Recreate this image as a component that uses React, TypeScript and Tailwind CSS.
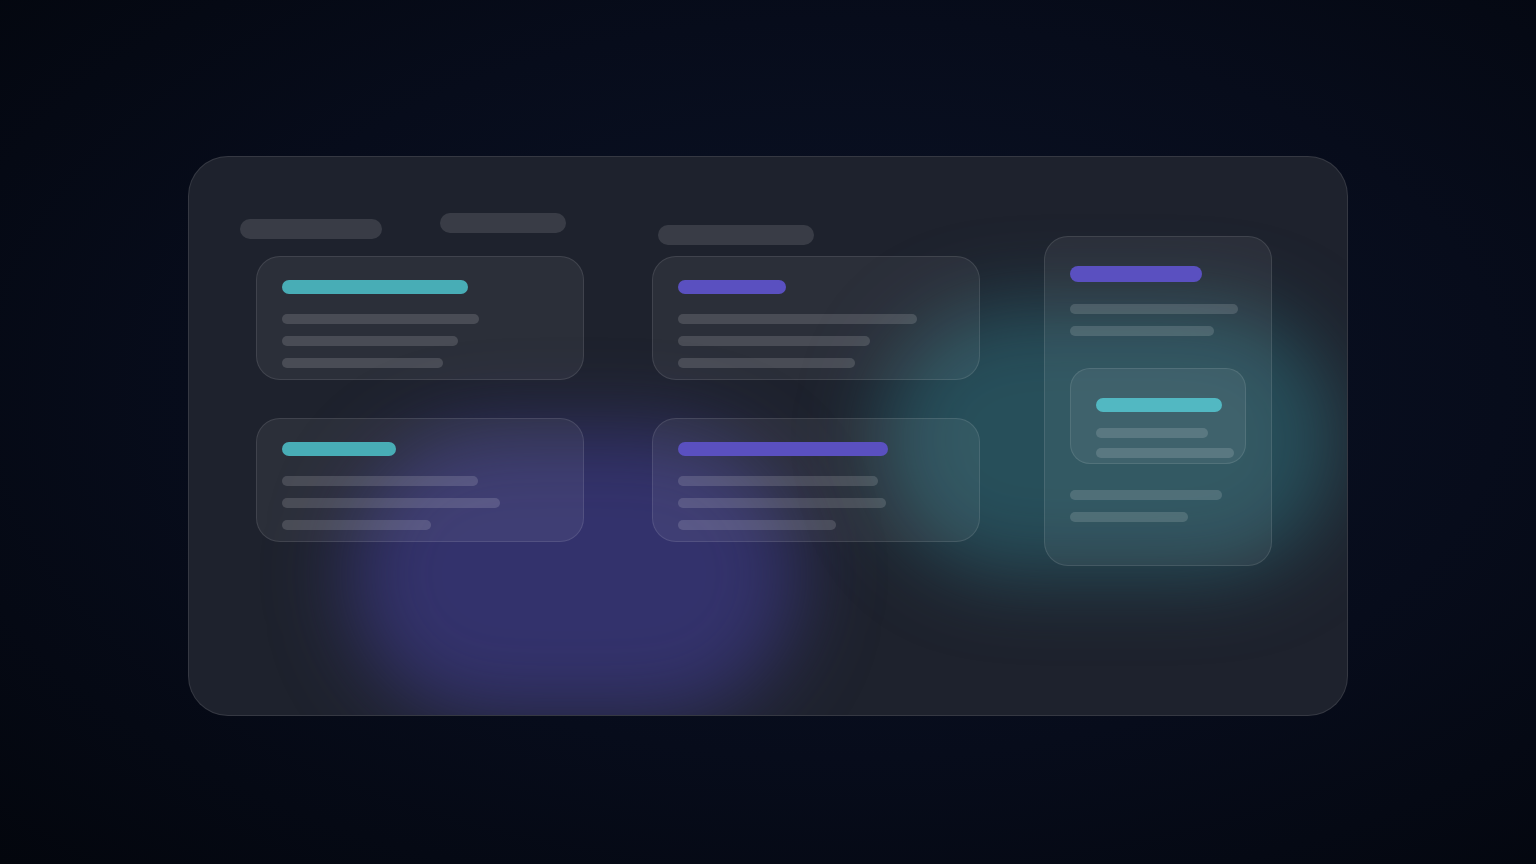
import { FC } from 'react'

type Tone = 'cyan' | 'purple'

interface SkeletonCardProps {
    tone: Tone
    barWidth: number
    lines: number[]
}

const barColor: Record<Tone, string> = {
    cyan: 'bg-[#48adb6]',
    purple: 'bg-[#5a50c0]',
}

const SkeletonCard: FC<SkeletonCardProps> = ({ tone, barWidth, lines }) => (
    <div className="relative h-[124px] w-[328px] rounded-[24px] border border-white/10 bg-white/[0.06] pl-[25px] pt-[23px]">
        <div className={`h-[14px] rounded-full ${barColor[tone]}`} style={{ width: barWidth }} />
        <div className="mt-[20px] flex flex-col gap-3">
            {lines.map((w, i) => (
                <div key={i} className="h-[10px] rounded-full bg-white/[0.14]" style={{ width: w }} />
            ))}
        </div>
    </div>
)

const cards: SkeletonCardProps[] = [
    { tone: 'cyan', barWidth: 186, lines: [197, 176, 161] },
    { tone: 'purple', barWidth: 108, lines: [239, 192, 177] },
    { tone: 'cyan', barWidth: 114, lines: [196, 218, 149] },
    { tone: 'purple', barWidth: 210, lines: [200, 208, 158] },
]

export default function App() {
    return (
        <div className="flex h-screen w-full items-center justify-center bg-[radial-gradient(ellipse_at_55%_45%,#0b1327_0%,#070c1b_55%,#03060d_100%)]">
            <div className="relative mt-[8px] h-[560px] w-[1160px] overflow-hidden rounded-[40px] border border-white/10 bg-[#1e222d]">
                {/* glow blobs */}
                <div className="pointer-events-none absolute left-[160px] top-[272px] h-[290px] w-[450px] rounded-full bg-[#4640a0]/55 blur-[40px]" />
                <div className="pointer-events-none absolute left-[690px] top-[148px] h-[270px] w-[460px] rounded-full bg-[#2f7b88]/50 blur-[40px]" />

                <div className="relative flex items-start pl-[51px] pt-[56px]">
                    {/* Left columns */}
                    <div className="flex flex-col">
                        <div className="flex h-[32px] items-start">
                            <div className="mt-[6px] h-[20px] w-[142px] rounded-full bg-white/[0.12]" />
                            <div className="ml-[58px] h-[20px] w-[126px] rounded-full bg-white/[0.12]" />
                            <div className="ml-[92px] mt-[12px] h-[20px] w-[156px] rounded-full bg-white/[0.12]" />
                        </div>
                        <div className="ml-[16px] mt-[11px] grid grid-cols-[328px_328px] gap-x-[68px] gap-y-[38px]">
                            {cards.map((c, i) => (
                                <SkeletonCard key={i} {...c} />
                            ))}
                        </div>
                    </div>

                    {/* Right tall card */}
                    <div className="ml-[64px] mt-[23px] h-[330px] w-[228px] rounded-[24px] border border-white/10 bg-white/[0.06] pl-[25px] pt-[29px]">
                        <div className="h-[16px] w-[132px] rounded-full bg-[#5a50c0]" />
                        <div className="mt-[22px] flex flex-col gap-3">
                            <div className="h-[10px] w-[168px] rounded-full bg-white/[0.14]" />
                            <div className="h-[10px] w-[144px] rounded-full bg-white/[0.14]" />
                        </div>
                        <div className="mt-[32px] h-[96px] w-[176px] rounded-[20px] border border-white/10 bg-white/[0.06] pl-[25px] pt-[29px]">
                            <div className="h-[14px] w-[126px] rounded-full bg-[#52b8c2]" />
                            <div className="mt-[16px] flex flex-col gap-[10px]">
                                <div className="h-[10px] w-[112px] rounded-full bg-white/[0.14]" />
                                <div className="h-[10px] w-[138px] rounded-full bg-white/[0.14]" />
                            </div>
                        </div>
                        <div className="mt-[26px] flex flex-col gap-3">
                            <div className="h-[10px] w-[152px] rounded-full bg-white/[0.14]" />
                            <div className="h-[10px] w-[118px] rounded-full bg-white/[0.14]" />
                        </div>
                    </div>
                </div>
            </div>
        </div>
    )
}
